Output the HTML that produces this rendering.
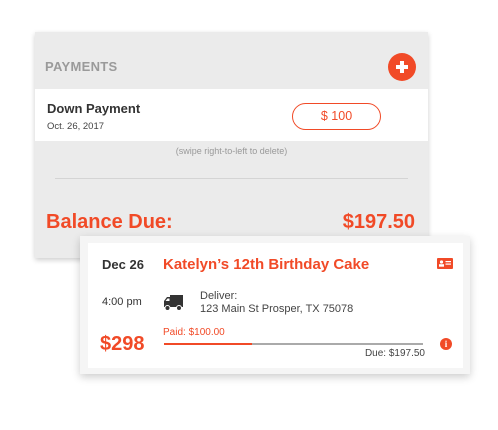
<!DOCTYPE html>
<html><head><style>
body{margin:0;width:498px;height:430px;background:#fff;position:relative;overflow:hidden;font-family:"Liberation Sans",sans-serif}
.a{position:absolute}
#panel{left:35px;top:32px;width:393px;height:226px;background:#ebebeb;box-shadow:0 2px 5px rgba(0,0,0,.2)}
#card{left:80px;top:236px;width:390px;height:138px;background:#f5f5f5;box-shadow:0 3px 8px rgba(0,0,0,.2)}
#cardin{left:88px;top:243px;width:375px;height:125px;background:#fff}
.red{color:#f14a27}
</style></head><body>
<div id="panel" class="a"></div>
<div class="a" style="left:45px;top:59px;font-size:13px;font-weight:bold;color:#9a9a9a;letter-spacing:.3px">PAYMENTS</div>
<div class="a" style="left:388px;top:53px;width:28px;height:28px;border-radius:50%;background:#f14a27"></div>
<div class="a" style="left:396px;top:65.25px;width:12px;height:3.5px;background:#fff"></div>
<div class="a" style="left:400.25px;top:61px;width:3.5px;height:12px;background:#fff"></div>
<div class="a" style="left:35px;top:89px;width:393px;height:52px;background:#fff"></div>
<div class="a" style="left:47px;top:101px;font-size:13px;font-weight:bold;color:#333">Down Payment</div>
<div class="a" style="left:47px;top:121px;font-size:9.5px;color:#444">Oct. 26, 2017</div>
<div class="a red" style="left:292px;top:103px;width:87px;height:25px;border:1px solid #f14a27;border-radius:14px;font-size:12.5px;text-align:center;line-height:25px">$ 100</div>
<div class="a" style="left:35px;top:146px;width:393px;text-align:center;font-size:9px;color:#999">(swipe right-to-left to delete)</div>
<div class="a" style="left:55px;top:178px;width:353px;height:1px;background:#d4d4d4"></div>
<div class="a red" style="left:46px;top:211px;font-size:20px;font-weight:bold">Balance Due:</div>
<div class="a red" style="left:330px;top:211px;width:85px;text-align:right;font-size:20px;font-weight:bold">$197.50</div>
<div id="card" class="a"></div>
<div id="cardin" class="a"></div>
<div class="a" style="left:102px;top:257px;font-size:13px;font-weight:bold;color:#333">Dec 26</div>
<div class="a red" style="left:163px;top:256px;font-size:15px;font-weight:bold">Katelyn’s 12th Birthday Cake</div>
<svg class="a" style="left:437px;top:258px" width="16" height="11" viewBox="0 0 16 11"><rect width="16" height="11" rx="1" fill="#f14a27"/><circle cx="4.5" cy="4" r="1.6" fill="#fff"/><rect x="2" y="6.2" width="5" height="2.5" fill="#fff"/><rect x="8.5" y="3" width="5.5" height="1.2" fill="#fff"/><rect x="8.5" y="5.5" width="5.5" height="1.2" fill="#fff"/></svg>
<div class="a" style="left:102px;top:296px;font-size:11px;color:#333">4:00 pm</div>
<svg class="a" style="left:163px;top:294px" width="21" height="18" viewBox="0 0 21 18"><path d="M7 1h13v12H7z M1 7l3-4h4v10H1z" fill="#333"/><circle cx="4.5" cy="14" r="2.5" fill="#333" stroke="#fff" stroke-width="1"/><circle cx="16" cy="14" r="2.5" fill="#333" stroke="#fff" stroke-width="1"/><path d="M2.5 7l2-2.5h2V7z" fill="#fff"/></svg>
<div class="a" style="left:200px;top:290px;font-size:11px;color:#444;line-height:13px">Deliver:<br>123 Main St Prosper, TX 75078</div>
<div class="a red" style="left:100px;top:333px;font-size:20px;font-weight:bold">$298</div>
<div class="a red" style="left:163px;top:327px;font-size:10px">Paid: $100.00</div>
<div class="a" style="left:164px;top:343px;width:259px;height:2px;background:#aaa"></div>
<div class="a" style="left:164px;top:342.5px;width:88px;height:2.5px;background:#f14a27"></div>
<div class="a" style="left:300px;top:348px;width:125px;text-align:right;font-size:10px;color:#444">Due: $197.50</div>
<div class="a" style="left:440px;top:338px;width:12px;height:12px;border-radius:50%;background:#f14a27;color:#fff;font-size:9px;font-weight:bold;text-align:center;line-height:12px;font-family:'Liberation Serif',serif">i</div>
</body></html>
